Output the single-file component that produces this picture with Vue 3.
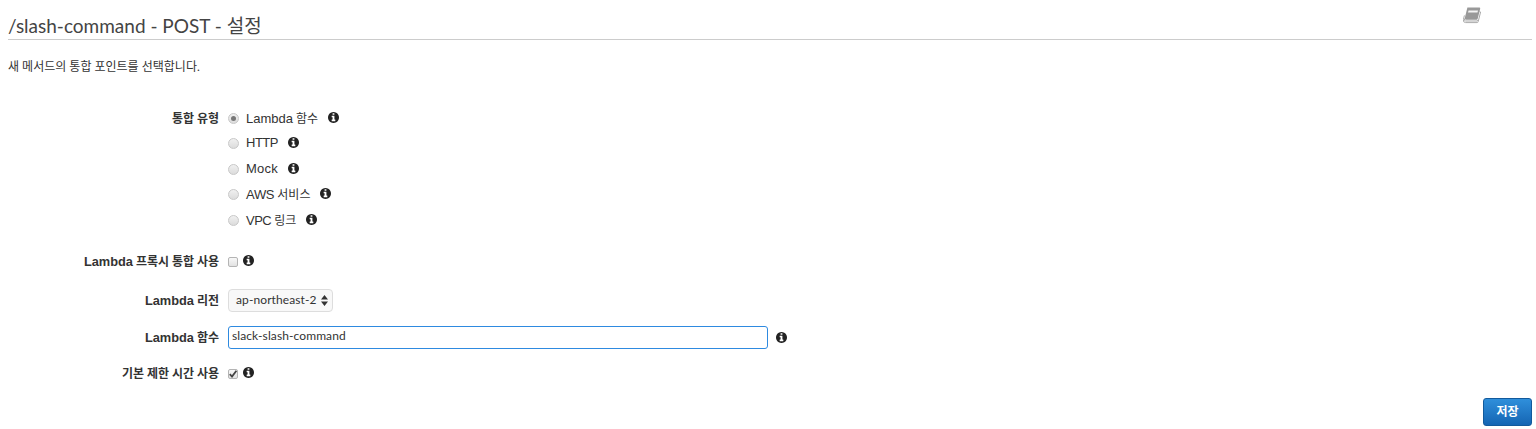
<script setup>
const infoPath = 'M1152 1376v-160q0-14-9-23t-23-9h-96v-512q0-14-9-23t-23-9h-320q-14 0-23 9t-9 23v160q0 14 9 23t23 9h96v320h-96q-14 0-23 9t-9 23v160q0 14 9 23t23 9h448q14 0 23-9t9-23zm-128-896v-160q0-14-9-23t-23-9h-192q-14 0-23 9t-9 23v160q0 14 9 23t23 9h192q14 0 23-9t9-23zm640 416q0 209-103 385.5t-279.5 279.5-385.5 103-385.5-103-279.5-279.5-103-385.5 103-385.5 279.5-279.5 385.5-103 385.5 103 279.5 279.5 103 385.5z'
const options = [
  { latin: 'Lambda', ko: '함수', checked: true, fit: '' },
  { latin: 'HTTP', ko: '', checked: false, fit: 'tight' },
  { latin: 'Mock', ko: '', checked: false, fit: 'loose' },
  { latin: 'AWS', ko: '서비스', checked: false, fit: 'snug' },
  { latin: 'VPC', ko: '링크', checked: false, fit: 'tight' },
]
</script>

<template>
  <div class="page">
    <header class="head">
      <h2 class="title">/slash-command - POST - 설정</h2>
      <svg class="book" viewBox="0 0 18 17" width="18" height="17" aria-hidden="true">
        <path d="M4.4 0.6 H16.4 Q17.4 0.6 17.2 1.8 L14.6 12 Q14.4 12.8 13.6 12.8 H3 Q1.4 12.8 1.8 11 Z" fill="#999" />
        <path d="M1.6 11.5 Q0.8 13.8 2.6 14 H14.4 L15 13 M16.4 4.6 L17.6 5 L15.2 14.6 Q15 15.6 14.2 15.6 H2.6 Q0 15.6 0.4 12.6 L1.4 8.4" fill="none" stroke="#aaa" stroke-width="1" />
        <path d="M5.6 3.4 H15 L14.5 5.6 H5 Z" fill="#f4f4f4" />
      </svg>
    </header>
    <p class="desc">새 메서드의 통합 포인트를 선택합니다.</p>

    <div class="form">
      <div class="row types">
        <div class="label">통합 유형</div>
        <div class="radios">
          <div v-for="o in options" :key="o.latin" class="radio-row">
            <span class="radio" :class="{ on: o.checked }"></span>
            <span class="opt"><span class="lat" :class="o.fit">{{ o.latin }}</span>{{ o.ko ? ' ' + o.ko : '' }}</span>
            <svg class="info gap10" viewBox="128 128 1536 1536" aria-hidden="true"><path :d="infoPath" /></svg>
          </div>
        </div>
      </div>

      <div class="row proxy">
        <div class="label"><span class="lat">Lambda</span> 프록시 통합 사용</div>
        <span class="check"></span>
        <svg class="info gap5 up" viewBox="128 128 1536 1536" aria-hidden="true"><path :d="infoPath" /></svg>
      </div>

      <div class="row region">
        <div class="label"><span class="lat">Lambda</span> 리전</div>
        <div class="select">
          <span class="select-text">ap-northeast-2</span>
          <svg class="arrows" viewBox="0 0 7 11" width="7" height="11" aria-hidden="true">
            <path d="M3.5 0 L7 4.4 H0 Z M3.5 11 L0 6.6 H7 Z" fill="#333" />
          </svg>
        </div>
      </div>

      <div class="row func">
        <div class="label"><span class="lat">Lambda</span> 함수</div>
        <div class="input">slack-slash-command</div>
        <svg class="info gap8" viewBox="128 128 1536 1536" aria-hidden="true"><path :d="infoPath" /></svg>
      </div>

      <div class="row timeout">
        <div class="label">기본 제한 시간 사용</div>
        <span class="check on">
          <svg viewBox="0 0 10 10" width="10" height="10" aria-hidden="true">
            <path d="M1.8 5.2 L4 7.6 L8.4 1.8" fill="none" stroke="#444" stroke-width="1.8" />
          </svg>
        </span>
        <svg class="info gap5 up" viewBox="128 128 1536 1536" aria-hidden="true"><path :d="infoPath" /></svg>
      </div>
    </div>

    <div class="actions">
      <button class="save" type="button">저장</button>
    </div>
  </div>
</template>

<style>
html, body { margin: 0; background: #fff; }
</style>

<style scoped>
.page {
  box-sizing: border-box;
  height: 429px;
  padding: 0 4px 0 8px;
  font-family: Lato, "Liberation Sans", "Noto Sans CJK KR", sans-serif;
  color: #333;
  font-size: 12px;
  overflow: hidden;
}
.head {
  display: flex;
  justify-content: space-between;
  align-items: flex-start;
  height: 39px;
  border-bottom: 1px solid #ccc;
}
.title {
  margin: 0;
  padding-top: 13px;
  font-size: 19px;
  line-height: 25px;
  font-weight: 400;
  color: #444;
}
.book { margin: 7px 51px 0 0; }
.desc {
  margin: 20px 0 0;
  font-size: 12px;
  line-height: 14px;
  color: #333;
}
.form { margin-top: 30px; }
.row { display: flex; align-items: center; }
.lat { font-family: "Liberation Sans", sans-serif; font-size: 13px; }
.tight { letter-spacing: -0.5px; }
.snug { letter-spacing: -0.3px; }
.loose { letter-spacing: 0.25px; }
.label {
  flex: 0 0 211px;
  margin-right: 9px;
  text-align: right;
  font-weight: 700;
  font-size: 12px;
  line-height: 16px;
  color: #333;
}
.label .lat { font-size: 12.8px; }
.types { align-items: flex-start; }
.types .label { padding-top: 7px; }
.radios { display: flex; flex-direction: column; padding-top: 0.5px; margin-bottom: -0.5px; }
.radio-row {
  display: flex;
  align-items: center;
  height: 25.5px;
}
.radio {
  box-sizing: border-box;
  width: 11px;
  height: 11px;
  margin: 2px 7px 0 0;
  border-radius: 50%;
  border: 1px solid #c8c8c8;
  background: linear-gradient(#f0f0f0, #dcdcdc);
  display: flex;
  align-items: center;
  justify-content: center;
}
.radio.on::after {
  content: "";
  width: 5px;
  height: 5px;
  border-radius: 50%;
  background: #777;
}
.opt { font-size: 12px; color: #333; }
.info {
  width: 11px;
  height: 11px;
  fill: #222;
  flex: none;
}
.up { transform: translateY(-1px); }
.gap10 { margin-left: 10px; }
.gap5 { margin-left: 5px; }
.gap8 { margin-left: 8px; }
.proxy { margin-top: 22px; height: 16px; }
.check {
  box-sizing: border-box;
  width: 10px;
  height: 10px;
  border: 1px solid #b4b4b4;
  border-radius: 2px;
  background: linear-gradient(#f8f8f8, #e2e2e2);
  display: flex;
  align-items: center;
  justify-content: center;
}
.check svg { flex: none; }
.region { margin-top: 19px; height: 24px; }
.select {
  box-sizing: border-box;
  display: flex;
  align-items: center;
  justify-content: space-between;
  align-self: flex-start;
  width: 105px;
  height: 23px;
  padding: 0 4px 0 7px;
  border: 1px solid #ddd;
  border-radius: 4px;
  background: #f8f8f8;
  font-size: 12px;
  letter-spacing: 0.1px;
}
.select-text { padding-bottom: 2px; }
.func { margin-top: 13px; height: 24px; }
.input {
  box-sizing: border-box;
  width: 540px;
  height: 23px;
  padding: 0 3px;
  border: 1px solid #2e8ae0;
  border-radius: 3px;
  line-height: 17px;
  font-size: 12px;
  letter-spacing: 0.1px;
  color: #333;
  background: #fff;
}
.timeout { margin-top: 16px; height: 16px; }
.actions {
  display: flex;
  justify-content: flex-end;
  margin-top: 16px;
}
.save {
  box-sizing: border-box;
  width: 49px;
  height: 28px;
  padding: 0 0 2px;
  border: 1px solid #125a9c;
  border-radius: 3px;
  background: linear-gradient(#2f8fdb, #1565b3);
  color: #fff;
  font: 700 12px "Noto Sans CJK KR", sans-serif;
}
</style>
